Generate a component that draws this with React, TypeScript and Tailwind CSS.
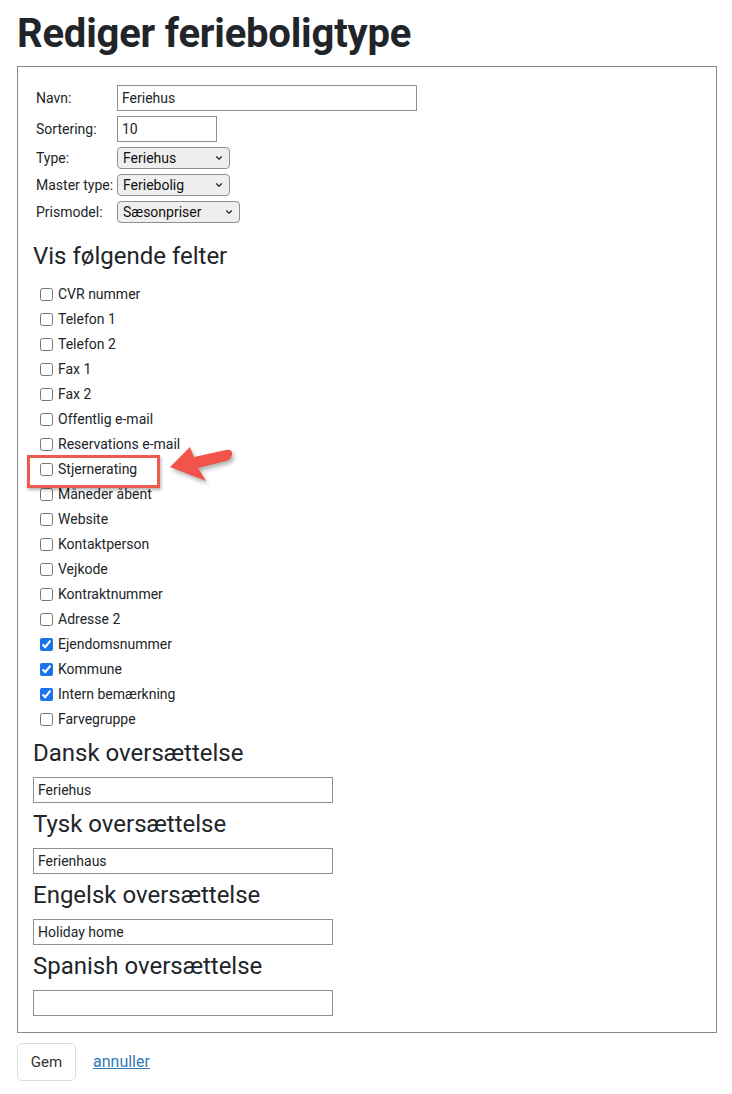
import { ChevronDown } from "lucide-react";

const fields: { label: string; checked?: boolean }[] = [
  { label: "CVR nummer" },
  { label: "Telefon 1" },
  { label: "Telefon 2" },
  { label: "Fax 1" },
  { label: "Fax 2" },
  { label: "Offentlig e-mail" },
  { label: "Reservations e-mail" },
  { label: "Stjernerating" },
  { label: "Måneder åbent" },
  { label: "Website" },
  { label: "Kontaktperson" },
  { label: "Vejkode" },
  { label: "Kontraktnummer" },
  { label: "Adresse 2" },
  { label: "Ejendomsnummer", checked: true },
  { label: "Kommune", checked: true },
  { label: "Intern bemærkning", checked: true },
  { label: "Farvegruppe" },
];

const translations = [
  { title: "Dansk oversættelse", value: "Feriehus" },
  { title: "Tysk oversættelse", value: "Ferienhaus" },
  { title: "Engelsk oversættelse", value: "Holiday home" },
  { title: "Spanish oversættelse", value: "" },
];

function Select({ value, width }: { value: string; width: string }) {
  return (
    <div className={`relative h-[22px] ${width}`}>
      <select
        defaultValue={value}
        className="h-full w-full appearance-none rounded-[4px] border border-[#8f8f8f] bg-[#efefef] pl-[5px] text-[14px] text-[#111]"
      >
        <option>{value}</option>
      </select>
      <ChevronDown className="pointer-events-none absolute right-[6px] top-[6px] h-[10px] w-[10px] text-[#222]" strokeWidth={2.75} />
    </div>
  );
}

function Arrow() {
  return (
    <svg
      className="pointer-events-none absolute left-[164px] top-[440px] drop-shadow-[2px_3px_2px_rgba(0,0,0,0.3)]"
      width="72"
      height="46"
      viewBox="0 0 72 46"
    >
      <path
        d="M6 27 L26 7 L30 17 L62 10 Q69 9 68 15 Q67 20 62 21 L34 28 L42 41 Z"
        fill="#f2544c"
      />
    </svg>
  );
}

export default function App() {
  return (
    <div className="relative min-h-[1094px] bg-white px-[17px] pt-[10px] font-['Roboto',sans-serif] text-[#212529]">
      <h1 className="text-[40px] font-bold leading-[48px] tracking-[-0.2px]">Rediger ferieboligtype</h1>

      <div className="mt-[8px] w-[700px] border border-[#8a8a8a] px-[15px] pb-[16px] pt-[18px]">
        <div className="flex flex-col gap-[5px] pl-[3px] text-[14px]">
          <div className="flex items-center">
            <span className="w-[81px]">Navn:</span>
            <input
              defaultValue="Feriehus"
              className="h-[26px] w-[300px] border border-[#8f8f8f] px-[4px] text-[14px] outline-none"
            />
          </div>
          <div className="flex items-center">
            <span className="w-[81px]">Sortering:</span>
            <input
              defaultValue="10"
              className="h-[26px] w-[100px] border border-[#8f8f8f] px-[4px] text-[14px] outline-none"
            />
          </div>
          <div className="flex items-center">
            <span className="w-[81px]">Type:</span>
            <Select value="Feriehus" width="w-[113px]" />
          </div>
          <div className="flex items-center">
            <span className="w-[81px]">Master type:</span>
            <Select value="Feriebolig" width="w-[113px]" />
          </div>
          <div className="flex items-center">
            <span className="w-[81px]">Prismodel:</span>
            <Select value="Sæsonpriser" width="w-[123px]" />
          </div>
        </div>

        <h3 className="mt-[18px] text-[24px] leading-[30px]">Vis følgende felter</h3>

        <div className="mt-[11px] flex flex-col pl-[7px] text-[14px]">
          {fields.map((f) => (
            <label key={f.label} className="flex h-[25px] items-center">
              <input
                type="checkbox"
                defaultChecked={f.checked}
                className="m-0 mr-[5px] h-[13px] w-[13px] accent-[#1a73e8]"
              />
              <span>{f.label}</span>
            </label>
          ))}
        </div>

        {translations.map((t) => (
          <div key={t.title}>
            <h3 className="mt-[6px] text-[24px] leading-[30px]">{t.title}</h3>
            <input
              defaultValue={t.value}
              className="mt-[9px] h-[26px] w-[300px] border border-[#8f8f8f] px-[4px] text-[14px] outline-none"
            />
          </div>
        ))}
      </div>

      <div className="mt-[10px] flex items-center gap-[17px]">
        <button className="h-[38px] w-[59px] rounded-[5px] border border-[#dcdcdc] bg-white text-[15px] text-[#333]">
          Gem
        </button>
        <a href="#" className="text-[16px] text-[#337ab7] underline">
          annuller
        </a>
      </div>

      <div className="pointer-events-none absolute left-[27px] top-[455px] h-[33px] w-[133px] border-[3px] border-[#ef5a50] shadow-[1px_2px_3px_rgba(0,0,0,0.3)]" />
      <Arrow />
    </div>
  );
}
